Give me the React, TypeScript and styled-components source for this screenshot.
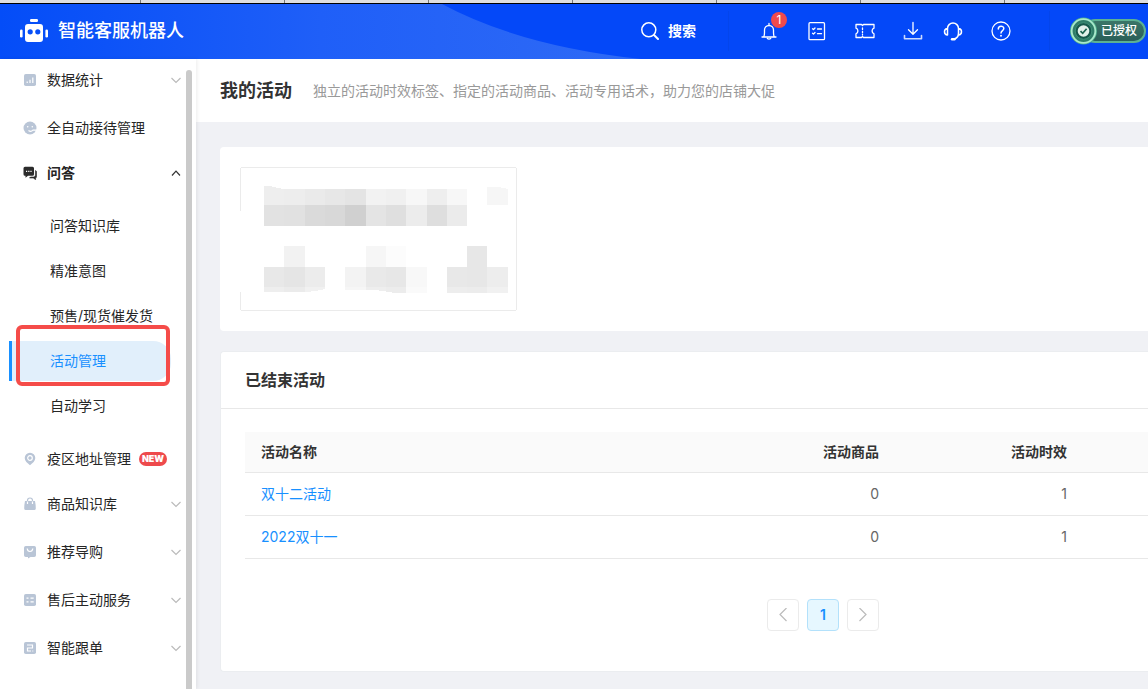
import React from "react";
import styled, { createGlobalStyle, css } from "styled-components";

const fontStack = `Inter, "Noto Sans CJK SC", "Noto Sans", sans-serif`;

const GlobalStyle = createGlobalStyle`
  *, *::before, *::after { box-sizing: border-box; }
  body { margin: 0; background: #f0f1f5; color: #333; font: 14px/20px ${fontStack}; }
  button { margin: 0; padding: 0; border: 0; background: none; color: inherit; font: inherit; cursor: pointer; }
  a { color: inherit; text-decoration: none; }
  ul { margin: 0; padding: 0; list-style: none; }
  h1, h2, p { margin: 0; }
  svg { display: block; flex: none; }
`;

const Page = styled.div`
  display: flex;
  flex-direction: column;
  min-height: 100vh;
  overflow-x: hidden;
`;

const TabStrip = styled.div`
  height: 4px;
  border-bottom: 1px solid #000;
  background: repeating-linear-gradient(90deg, #dfdfdf 0 140px, #777 140px 141px, #dfdfdf 141px 144px);
`;

/* ---------- top bar ---------- */

const TopBar = styled.header`
  position: relative;
  display: flex;
  align-items: center;
  height: 55px;
  padding: 0 2px 2px 20px;
  background: #0448f8;
  color: #fff;
`;

const TopBarWave = styled.svg`
  position: absolute;
  left: 0;
  top: 0;
`;

const Brand = styled.a`
  position: relative;
  display: flex;
  align-items: center;
  gap: 10px;
  font-size: 18px;
  line-height: 24px;
  font-weight: 500;
`;

const TopActions = styled.div`
  position: relative;
  display: flex;
  align-items: center;
  margin-left: auto;
`;

const SearchButton = styled.button`
  display: flex;
  align-items: center;
  gap: 9px;
  margin-right: 32px;
  font-weight: 600;
`;

const Divider = styled.span`
  width: 1px;
  height: 40px;
  background: #0445ec;
`;

const IconRow = styled.div<{ $gap: number }>`
  display: flex;
  align-items: center;
  gap: ${(p) => p.$gap}px;
`;

const ActionIcons = styled(IconRow)`
  padding: 0 36px 0 28px;
`;

const IconButton = styled.button`
  position: relative;
  display: grid;
  place-items: center;
  width: 24px;
  height: 24px;
`;

const CountBadge = styled.span`
  position: absolute;
  left: 14px;
  top: -7px;
  width: 16px;
  height: 16px;
  border-radius: 8px;
  background: #f04a4c;
  font-size: 12px;
  line-height: 16px;
  text-align: center;
`;

const AuthPill = styled.button`
  display: flex;
  align-items: center;
  margin-left: 20px;
  height: 28px;
`;

const AuthLabel = styled.span`
  height: 24px;
  margin-left: -14px;
  padding: 0 7px 0 16px;
  border: 2px solid #5cb193;
  border-radius: 12px;
  background: linear-gradient(#3a7568, #2a5f58);
  font-size: 12px;
  line-height: 20px;
  font-weight: 500;
`;

const Medal = styled.svg`
  position: relative;
`;

/* ---------- side menu ---------- */

const Body = styled.div`
  display: flex;
  flex: 1;
`;

const Sidebar = styled.aside`
  position: relative;
  display: flex;
  flex: none;
  width: 196px;
  padding-right: 4px;
  background: #fff;
  box-shadow: 1px 0 4px rgba(0, 0, 0, 0.08);
`;

const Menu = styled.nav`
  flex: 1;
  padding-top: 1px;
`;

const ScrollThumb = styled.div`
  width: 6px;
  margin-top: 11px;
  border-radius: 3px 3px 0 0;
  background: #cacaca;
`;

const MenuItem = styled.li<{ $group: boolean }>`
  margin-bottom: ${(p) => (p.$group ? 8 : 5)}px;
`;

const menuRow = css`
  display: flex;
  align-items: center;
  gap: 10px;
  width: 100%;
  height: 40px;
  padding: 0 4px 0 23px;
  color: #262626;
`;

const MenuButton = styled.button<{ $open?: boolean }>`
  ${menuRow}
  font-weight: ${(p) => (p.$open ? 600 : 400)};
  > svg:last-child { margin-left: auto; }
`;

const MenuLink = styled.a`
  ${menuRow}
`;

const NewTag = styled.span`
  width: 28px;
  height: 14px;
  margin-left: -2px;
  border-radius: 7px;
  background: #ee4a4c;
  color: #fff;
  font-size: 9px;
  line-height: 14px;
  font-weight: 900;
  text-align: center;
`;

const SubMenu = styled.ul`
  display: flow-root;
  margin-top: 13px;
`;

const SubItem = styled.li<{ $active: boolean }>`
  position: relative;
  margin: 0 15px 5px 9px;
  border-left: 3px solid ${(p) => (p.$active ? "#1890ff" : "transparent")};
`;

const SubLink = styled.a<{ $active: boolean }>`
  display: flex;
  align-items: center;
  height: 40px;
  padding-left: 38px;
  border-radius: 0 18px 18px 0;
  background: ${(p) => (p.$active ? "#e1effb" : "transparent")};
  color: ${(p) => (p.$active ? "#1890ff" : "#262626")};
`;

const Marker = styled.span`
  position: absolute;
  left: 4px;
  right: 1px;
  top: -16px;
  bottom: -5px;
  border: 4px solid #f54c49;
  border-radius: 6px;
  pointer-events: none;
`;

/* ---------- content ---------- */

const Main = styled.main`
  flex: 1;
  min-width: 0;
  padding-bottom: 17px;
`;

const PageHead = styled.div`
  display: flex;
  align-items: center;
  gap: 21px;
  height: 63px;
  padding-left: 24px;
  background: #fff;
  white-space: nowrap;
`;

const PageTitle = styled.h1`
  font-size: 18px;
  line-height: 24px;
  font-weight: 600;
`;

const PageHint = styled.p`
  color: #999;
`;

const PreviewPanel = styled.section`
  margin: 25px 0 20px 24px;
  padding: 20px;
  border-radius: 4px 0 0 4px;
  background: #fff;
`;

const EndedPanel = styled.section`
  margin-left: 24px;
  border: 1px solid #ebedf0;
  border-right: 0;
  border-radius: 4px 0 0 4px;
  background: #fff;
`;

const PanelHead = styled.div`
  height: 57px;
  padding: 16px 24px;
  border-bottom: 1px solid #e8e8e8;
`;

const PanelTitle = styled.h2`
  font-size: 16px;
  line-height: 24px;
  font-weight: 600;
`;

const PanelBody = styled.div`
  padding: 23px 0 40px 24px;
`;

const Table = styled.table`
  width: 100%;
  border-collapse: separate;
  border-spacing: 0;
  table-layout: fixed;
`;

const cell = css<{ $right?: boolean }>`
  padding: 0 16px;
  border-bottom: 1px solid #e8e8e8;
  text-align: ${(p) => (p.$right ? "right" : "left")};
`;

const Th = styled.th<{ $right?: boolean }>`
  ${cell}
  height: 41px;
  background: #fafafa;
  font-weight: 600;
`;

const Td = styled.td<{ $right?: boolean }>`
  ${cell}
  height: 43px;
  color: #666;
`;

const ActivityLink = styled.a`
  color: #1890ff;
`;

const Pagination = styled.nav`
  display: flex;
  justify-content: flex-end;
  gap: 8px;
  margin-top: 40px;
  padding-right: 269px;
`;

const PageButton = styled.button<{ $current?: boolean }>`
  display: grid;
  place-items: center;
  width: 32px;
  height: 32px;
  border: 1px solid ${(p) => (p.$current ? "#b3e1fb" : "#ebebeb")};
  border-radius: 4px;
  background: ${(p) => (p.$current ? "#e6f7ff" : "#fff")};
  color: ${(p) => (p.$current ? "#1890ff" : "#bbb")};
  font-weight: 600;
`;

/* ---------- drawings ---------- */

const Line = ({ size = 20, width = 1.3, children }: { size?: number; width?: number; children: React.ReactNode }) => (
  <svg width={size} height={size} viewBox={`0 0 ${size} ${size}`} fill="none" stroke="currentColor" strokeWidth={width} strokeLinecap="round" strokeLinejoin="round" aria-hidden>
    {children}
  </svg>
);

const RobotLogo = () => (
  <svg width="28" height="24" viewBox="0 0 28 24" fill="#fff" aria-hidden>
    <rect x="10" y="0" width="8" height="3" rx="1.2" />
    <rect x="0" y="10.5" width="2.6" height="8" rx="1.3" />
    <rect x="25.4" y="10.5" width="2.6" height="8" rx="1.3" />
    <path fillRule="evenodd" d="M8 5h12a3 3 0 0 1 3 3v12a3 3 0 0 1-3 3H8a3 3 0 0 1-3-3V8a3 3 0 0 1 3-3zM10.2 10.2a2.6 2.6 0 1 0 0 5.2a2.6 2.6 0 0 0 0-5.2zM17.8 10.2a2.6 2.6 0 1 0 0 5.2a2.6 2.6 0 0 0 0-5.2z" />
  </svg>
);

const SearchIcon = () => (
  <Line size={18} width={1.5}><circle cx="7.8" cy="7.8" r="7" /><path d="M13 13l4 4" strokeWidth="2" /></Line>
);
const BellIcon = () => (
  <Line><path d="M3 16h14M4.8 15.8c.5-1.2.7-2 .7-4V9a4.5 4.5 0 0 1 9 0v2.800c0 2 .2 2.800.7 4M10 4.500V2.500M8.300 17.500q1.700 1.200 3.400 0" /></Line>
);
const ListIcon = () => (
  <Line><rect x="2" y="1.700" width="15.500" height="17" rx="1" /><path d="M5.500 7.800l1 .8 1.500-1.600M10.500 8h4M5.500 12.300l1 .8 1.500-1.600M10.500 12.700h4" /></Line>
);
const TicketIcon = () => (
  <Line><path d="M1 3.500h5.500l1 1 1-1H19v3.700a3 3 0 0 0 0 5.600v3.700H8.500l-1-1-1 1H1v-3.700a3 3 0 0 0 0-5.600z" /><path d="M7.500 7v1.500M7.500 10.300v1.500M7.500 13.300v.7" /></Line>
);
const DownloadIcon = () => (
  <Line><path d="M10 1.500v11.500M5.500 8.800L10 13.200l4.500-4.400" /><path d="M1.500 14.500v3.200h17v-3.200" opacity=".8" strokeWidth="1.600" /></Line>
);
const HeadsetIcon = () => (
  <Line width={1.5}><path d="M4.500 14V7.500a5.500 5.500 0 0 1 11 0V12q0 5-4.500 6M4.500 7.500C.500 7.800.500 13.700 4.500 14M15.500 7.500c4 .3 4 6.200 0 6.500" /><path d="M9 18.200h2.500" strokeWidth="2.400" /></Line>
);
const HelpIcon = () => (
  <Line><circle cx="10" cy="10" r="9" /><path d="M7.300 8c0-3.700 5.500-3.700 5.500-.4C12.800 9.600 10 9.600 10 12" strokeWidth="1.500" /><path d="M10 14.600v.2" strokeWidth="1.900" /></Line>
);

const AuthMedal = () => (
  <Medal width="27" height="28" viewBox="0 0 27 28" aria-hidden>
    <circle cx="13.500" cy="14" r="13.500" fill="#4fae8c" />
    <circle cx="13.500" cy="14" r="11.800" fill="#2f7d68" stroke="#a9e8cb" strokeWidth="1.800" />
    <circle cx="13.500" cy="14" r="8.300" fill="#17594c" stroke="#3f8f78" />
    <circle cx="13.500" cy="14" r="5.800" fill="#e2f1ea" />
    <path d="M10.500 14.200l2.200 2.100 3.900-4.500" fill="none" stroke="#1c6350" strokeWidth="1.700" />
  </Medal>
);

const Chevron = ({ dir, size = 12, color }: { dir: "up" | "down" | "left" | "right"; size?: number; color: string }) => {
  const shapes = {
    up: "M2 8.500L6 4.200L10 8.500",
    down: "M1.500 4L6 8.500L10.500 4",
    left: "M10.500 0L4 6.500L10.500 13",
    right: "M3.500 0L10 6.500L3.500 13",
  };
  return (
    <svg width={size} height={size} viewBox={`0 0 ${size} ${size}`} fill="none" stroke={color} strokeWidth="1.200" aria-hidden>
      <path d={shapes[dir]} />
    </svg>
  );
};

const tint = "#b9c5d6";
const MenuGlyph = ({ name }: { name: string }) => {
  const box = <rect x="1" y="1" width="12" height="12" rx="1.800" fill={tint} />;
  const stroke = { fill: "none", stroke: "#fff", strokeWidth: 1.2 };
  const drawings: Record<string, React.ReactNode> = {
    chart: <>{box}<path d="M4.200 10V8.500M7 10V6.700M9.800 10V4.500" {...stroke} /></>,
    face: <><circle cx="7" cy="7" r="6.500" fill={tint} /><circle cx="4.700" cy="5.700" r=".8" fill="#fff" /><circle cx="9.300" cy="5.700" r=".8" fill="#fff" /><path d="M5.500 9.500q2.500 2 4.500-.5l3.800.2" {...stroke} /></>,
    chat: <><path d="M2 .800h7.500a1.500 1.500 0 0 1 1.500 1.500v6a1.500 1.500 0 0 1-1.500 1.500H5l-2.500 2v-2H2A1.500 1.500 0 0 1 .500 8.300v-6A1.500 1.500 0 0 1 2 .800z" fill="#2b2b2b" /><path d="M12.500 4.500q1 .3 1 1.500v4.800q0 1-.9 1v1.900l-2.300-1.700H6.500l1-1h3q1.800 0 1.900-1.700z" fill="#2b2b2b" stroke="#2b2b2b" strokeWidth=".6" /><path d="M3 5.300h1.200M5.200 5.300h1.200M7.400 5.300h1.200" {...stroke} /></>,
    pin: <><path d="M7 .700a5.300 5.300 0 0 1 5.300 5.300c0 3-2.600 5-5.300 7.300C4.300 11 1.700 9 1.700 6A5.300 5.300 0 0 1 7 .700z" fill={tint} /><circle cx="7" cy="6" r="2.300" {...stroke} /></>,
    bag: <><path d="M2 4h10q1 5 .800 7.500-.1 1.500-1.500 1.500H2.700q-1.400 0-1.500-1.500Q1 9 2 4z" fill={tint} /><path d="M4.500 4.500V3.500a2.500 2.500 0 0 1 5 0v1" fill="none" stroke={tint} strokeWidth="1.200" /><path d="M4.500 4.500V7M9.500 4.500V7" {...stroke} /></>,
    shop: <><path d="M2.800 1h8.400A1.800 1.800 0 0 1 13 2.800v7.400a1.800 1.800 0 0 1-1.800 1.800H7.500L5 13.500V12H2.800A1.800 1.800 0 0 1 1 10.200V2.800A1.800 1.800 0 0 1 2.800 1z" fill={tint} /><path d="M4.200 3.500q.3 3 2.800 3t2.800-3" {...stroke} /></>,
    list: <>{box}<path d="M3.500 5.200h2M7.500 5.200h3.200M3.500 8.800h2M7.500 8.800h3.200" {...stroke} /></>,
    follow: <>{box}<path d="M4 4h5.500v3H4.500v3H8M9.300 10h1" {...stroke} /></>,
  };
  return <svg width="14" height="14" viewBox="0 0 14 14" aria-hidden>{drawings[name]}</svg>;
};

const columnEdges = [24, 44, 65, 85, 105, 126, 146, 166, 187, 207, 227, 247, 268];
const mosaicRows: { y: number; h: number; tones: (string | null)[] }[] = [
  { y: 22, h: 16, tones: ["eeeeee", "ededed", "eaeaea", "e7e7e7", "e4e4e4", "f2f2f2", "f0f0f0", "f7f7f7", "eeeeee", "f7f7f7", null, "f6f6f6"] },
  { y: 38, h: 21, tones: ["e2e2e2", "e1e1e1", "dadada", "d8d8d8", "d0d0d0", "e4e4e4", "dfdfdf", "ececec", "dedede", "ebebeb"] },
  { y: 79, h: 21, tones: [null, "f2f2f2", null, null, null, "f6f6f6", "fcfcfc", null, null, null, "e7e7e7"] },
  { y: 100, h: 20, tones: ["e8e8e8", "e5e5e5", "ececec", null, "f3f3f3", "e9e9e9", "e7e7e7", "f8f8f8", null, "e8e8e8", "e7e7e7", "ededed"] },
  { y: 120, h: 6, tones: ["eeeeee", "ebebeb", "f1f1f1", null, "f6f6f6", "eeeeee", "ececec", "fafafa", null, "ededed", "ececec", "f1f1f1"] },
];

const MosaicCard = () => (
  <svg width="277" height="144" viewBox="0 0 277 144" shapeRendering="crispEdges" role="img" aria-label="活动">
    <path d="M.5 44V2.500q0-2 2-2h272q2 0 2 2v139q0 2-2 2H2.500q-2 0-2-2V125" fill="none" stroke="#ebebeb" />
    {mosaicRows.map((row) =>
      row.tones.map((tone, i) =>
        tone ? (
          <rect key={`${row.y}-${i}`} x={columnEdges[i]} y={row.y} width={columnEdges[i + 1] - columnEdges[i]} height={row.h} fill={`#${tone}`} />
        ) : null
      )
    )}
    <path d="M24 22v-3h6l8 2 6 1z" fill="#eeeeee" />
    <path d="M247 22v-2l12 0 9 2z" fill="#f6f6f6" />
    <path d="M24 126v-1h41l11-1 9-2v4zM105 126v-3h30l14 2 6 1z" fill="#fff" />
  </svg>
);

/* ---------- data ---------- */

type Entry = { label: string; icon: string; group: boolean; isNew?: boolean; children?: string[] };

const menu: Entry[] = [
  { label: "数据统计", icon: "chart", group: true },
  { label: "全自动接待管理", icon: "face", group: false },
  { label: "问答", icon: "chat", group: true, children: ["问答知识库", "精准意图", "预售/现货催发货", "活动管理", "自动学习"] },
  { label: "疫区地址管理", icon: "pin", group: false, isNew: true },
  { label: "商品知识库", icon: "bag", group: true },
  { label: "推荐导购", icon: "shop", group: true },
  { label: "售后主动服务", icon: "list", group: true },
  { label: "智能跟单", icon: "follow", group: true },
];

const activities = [
  { name: "双十二活动", goods: 0, period: 1 },
  { name: "2022双十一", goods: 0, period: 1 },
];

const activeLabel = "活动管理";

export default function App() {
  return (
    <Page>
      <GlobalStyle />
      <TabStrip />
      <TopBar>
        <TopBarWave width="641" height="55" viewBox="0 0 641 55" aria-hidden>
          <defs>
            <linearGradient id="wave" x1="0" x2="1">
              <stop offset="0" stopColor="#044df8" />
              <stop offset=".5" stopColor="#1f5ff8" />
              <stop offset="1" stopColor="#2f6af5" />
            </linearGradient>
          </defs>
          <path d="M0 0H442Q520 42 641 55H0z" fill="url(#wave)" />
        </TopBarWave>
        <Brand href="#"><RobotLogo />智能客服机器人</Brand>
        <TopActions>
          <SearchButton><SearchIcon />搜索</SearchButton>
          <Divider />
          <ActionIcons $gap={24}>
            <IconButton aria-label="通知"><BellIcon /><CountBadge>1</CountBadge></IconButton>
            <IconButton aria-label="任务"><ListIcon /></IconButton>
            <IconButton aria-label="卡券"><TicketIcon /></IconButton>
            <IconRow $gap={16}>
              <IconButton aria-label="下载"><DownloadIcon /></IconButton>
              <IconButton aria-label="客服"><HeadsetIcon /></IconButton>
            </IconRow>
            <IconButton aria-label="帮助"><HelpIcon /></IconButton>
          </ActionIcons>
          <Divider />
          <AuthPill><AuthMedal /><AuthLabel>已授权</AuthLabel></AuthPill>
        </TopActions>
      </TopBar>
      <Body>
        <Sidebar>
          <Menu>
            <ul>
              {menu.map((entry) => (
                <MenuItem key={entry.label} $group={entry.group}>
                  {entry.group ? (
                    <MenuButton $open={!!entry.children} aria-expanded={!!entry.children}>
                      <MenuGlyph name={entry.icon} />
                      {entry.label}
                      <Chevron dir={entry.children ? "up" : "down"} color={entry.children ? "#333" : "#bbb"} />
                    </MenuButton>
                  ) : (
                    <MenuLink href="#">
                      <MenuGlyph name={entry.icon} />
                      {entry.label}
                      {entry.isNew && <NewTag>NEW</NewTag>}
                    </MenuLink>
                  )}
                  {entry.children && (
                    <SubMenu>
                      {entry.children.map((label) => (
                        <SubItem key={label} $active={label === activeLabel}>
                          <SubLink href="#" $active={label === activeLabel}>{label}</SubLink>
                          {label === activeLabel && <Marker />}
                        </SubItem>
                      ))}
                    </SubMenu>
                  )}
                </MenuItem>
              ))}
            </ul>
          </Menu>
          <ScrollThumb />
        </Sidebar>
        <Main>
          <PageHead>
            <PageTitle>我的活动</PageTitle>
            <PageHint>独立的活动时效标签、指定的活动商品、活动专用话术，助力您的店铺大促</PageHint>
          </PageHead>
          <PreviewPanel><MosaicCard /></PreviewPanel>
          <EndedPanel>
            <PanelHead><PanelTitle>已结束活动</PanelTitle></PanelHead>
            <PanelBody>
              <Table>
                <colgroup>
                  <col />
                  <col width="188" />
                  <col width="188" />
                  <col width="65" />
                </colgroup>
                <thead>
                  <tr><Th>活动名称</Th><Th $right>活动商品</Th><Th $right>活动时效</Th><Th aria-hidden /></tr>
                </thead>
                <tbody>
                  {activities.map((a) => (
                    <tr key={a.name}>
                      <Td><ActivityLink href="#">{a.name}</ActivityLink></Td>
                      <Td $right>{a.goods}</Td>
                      <Td $right>{a.period}</Td>
                      <Td />
                    </tr>
                  ))}
                </tbody>
              </Table>
              <Pagination aria-label="分页">
                <PageButton aria-label="上一页"><Chevron dir="left" size={14} color="#bbb" /></PageButton>
                <PageButton $current>1</PageButton>
                <PageButton aria-label="下一页"><Chevron dir="right" size={14} color="#bbb" /></PageButton>
              </Pagination>
            </PanelBody>
          </EndedPanel>
        </Main>
      </Body>
    </Page>
  );
}
